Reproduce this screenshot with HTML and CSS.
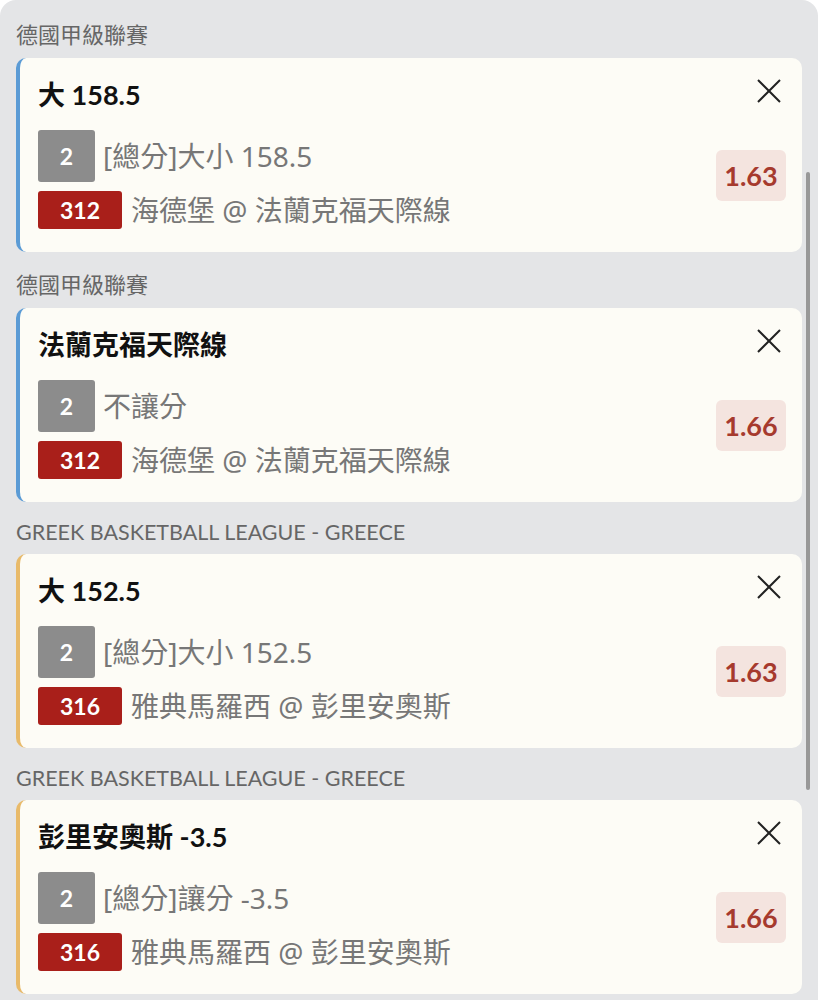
FILE: index.html
```html
<!DOCTYPE html>
<html lang="zh-Hant">
<head>
    <meta charset="UTF-8">
    <meta name="viewport" content="width=device-width, initial-scale=1.0">
    <title>Bet Slip</title>
    <link rel="stylesheet" href="styles.css">
</head>
<body>
    <div class="sheet">
        <div class="scrollbar"></div>

        <div class="league first">德國甲級聯賽</div>
        <div class="bet blue">
            <div class="bet-main">
                <div class="bet-title">大 158.5</div>
                <div class="bet-row">
                    <span class="tag tag-gray">2</span>
                    <span class="bet-text">[總分]大小 158.5</span>
                </div>
                <div class="bet-row">
                    <span class="tag tag-red">312</span>
                    <span class="bet-text">海德堡 @ 法蘭克福天際線</span>
                </div>
            </div>
            <div class="bet-side">
                <svg class="close" viewBox="0 0 24 24" width="24" height="24"><path d="M1 1L23 23M23 1L1 23" stroke="#222" stroke-width="2" fill="none"/></svg>
                <div class="odds">1.63</div>
            </div>
        </div>

        <div class="league">德國甲級聯賽</div>
        <div class="bet blue">
            <div class="bet-main">
                <div class="bet-title">法蘭克福天際線</div>
                <div class="bet-row">
                    <span class="tag tag-gray">2</span>
                    <span class="bet-text">不讓分</span>
                </div>
                <div class="bet-row">
                    <span class="tag tag-red">312</span>
                    <span class="bet-text">海德堡 @ 法蘭克福天際線</span>
                </div>
            </div>
            <div class="bet-side">
                <svg class="close" viewBox="0 0 24 24" width="24" height="24"><path d="M1 1L23 23M23 1L1 23" stroke="#222" stroke-width="2" fill="none"/></svg>
                <div class="odds">1.66</div>
            </div>
        </div>

        <div class="league latin">GREEK BASKETBALL LEAGUE - GREECE</div>
        <div class="bet gold">
            <div class="bet-main">
                <div class="bet-title">大 152.5</div>
                <div class="bet-row">
                    <span class="tag tag-gray">2</span>
                    <span class="bet-text">[總分]大小 152.5</span>
                </div>
                <div class="bet-row">
                    <span class="tag tag-red">316</span>
                    <span class="bet-text">雅典馬羅西 @ 彭里安奧斯</span>
                </div>
            </div>
            <div class="bet-side">
                <svg class="close" viewBox="0 0 24 24" width="24" height="24"><path d="M1 1L23 23M23 1L1 23" stroke="#222" stroke-width="2" fill="none"/></svg>
                <div class="odds">1.63</div>
            </div>
        </div>

        <div class="league latin">GREEK BASKETBALL LEAGUE - GREECE</div>
        <div class="bet gold">
            <div class="bet-main">
                <div class="bet-title">彭里安奧斯 -3.5</div>
                <div class="bet-row">
                    <span class="tag tag-gray">2</span>
                    <span class="bet-text">[總分]讓分 -3.5</span>
                </div>
                <div class="bet-row">
                    <span class="tag tag-red">316</span>
                    <span class="bet-text">雅典馬羅西 @ 彭里安奧斯</span>
                </div>
            </div>
            <div class="bet-side">
                <svg class="close" viewBox="0 0 24 24" width="24" height="24"><path d="M1 1L23 23M23 1L1 23" stroke="#222" stroke-width="2" fill="none"/></svg>
                <div class="odds">1.66</div>
            </div>
        </div>
    </div>
</body>
</html>
```

FILE: styles.css
```css
* {
    margin: 0;
    padding: 0;
    box-sizing: border-box;
}
body {
    background: #ffffff;
    font-family: Lato, "Noto Sans CJK TC", sans-serif;
}
.sheet {
    position: relative;
    background: #e4e5e7;
    border-radius: 16px 16px 0 0;
    padding: 0 16px 20px 16px;
    min-height: 1000px;
}
/* 右侧滚动条 */
.scrollbar {
    position: absolute;
    left: 806px;
    top: 172px;
    width: 4px;
    height: 618px;
    background: #989898;
    border-radius: 2px;
}
.league {
    font-size: 22px;
    line-height: 26px;
    height: 56px;
    color: #666;
    padding-top: 20px;
}
.league.first {
    height: 58px;
    padding-top: 22px;
}
/* 英文联赛名行高矮一些 */
.league.latin {
    font-size: 21.5px;
    height: 52px;
    padding-top: 17px;
}
.bet {
    display: flex;
    background: #fdfcf6;
    border-radius: 10px;
    border-left: 4px solid #5b9bd5;
    height: 194px;
    padding: 21px 16px 0 18px;
}
.bet.gold {
    border-left-color: #e8ba6a;
}
.bet-main {
    flex: 1;
}
.bet-title {
    font-size: 27px;
    font-weight: 700;
    line-height: 32px;
    color: #111;
    margin-bottom: 19px;
}
.bet-row {
    display: flex;
    align-items: center;
    margin-bottom: 9px;
}
.tag {
    display: flex;
    align-items: center;
    justify-content: center;
    color: #fff;
    font-size: 23px;
    font-weight: 700;
    border-radius: 3px;
    margin-right: 8px;
}
.tag-gray {
    width: 57px;
    height: 52px;
    background: #8c8c8c;
}
.tag-red {
    width: 84px;
    height: 38px;
    background: #a91f1a;
    margin-right: 9px;
}
.bet-text {
    font-family: "Noto Sans", "Noto Sans CJK TC", sans-serif;
    font-size: 28px;
    line-height: 34px;
    color: #777;
}
.bet-side {
    display: flex;
    flex-direction: column;
    align-items: flex-end;
}
.close {
    margin-right: 5px;
}
.odds {
    margin-top: 47px;
    width: 70px;
    height: 51px;
    border-radius: 6px;
    background: #f4e4df;
    color: #a63a2e;
    font-size: 27px;
    font-weight: 700;
    display: flex;
    align-items: center;
    justify-content: center;
}
```
